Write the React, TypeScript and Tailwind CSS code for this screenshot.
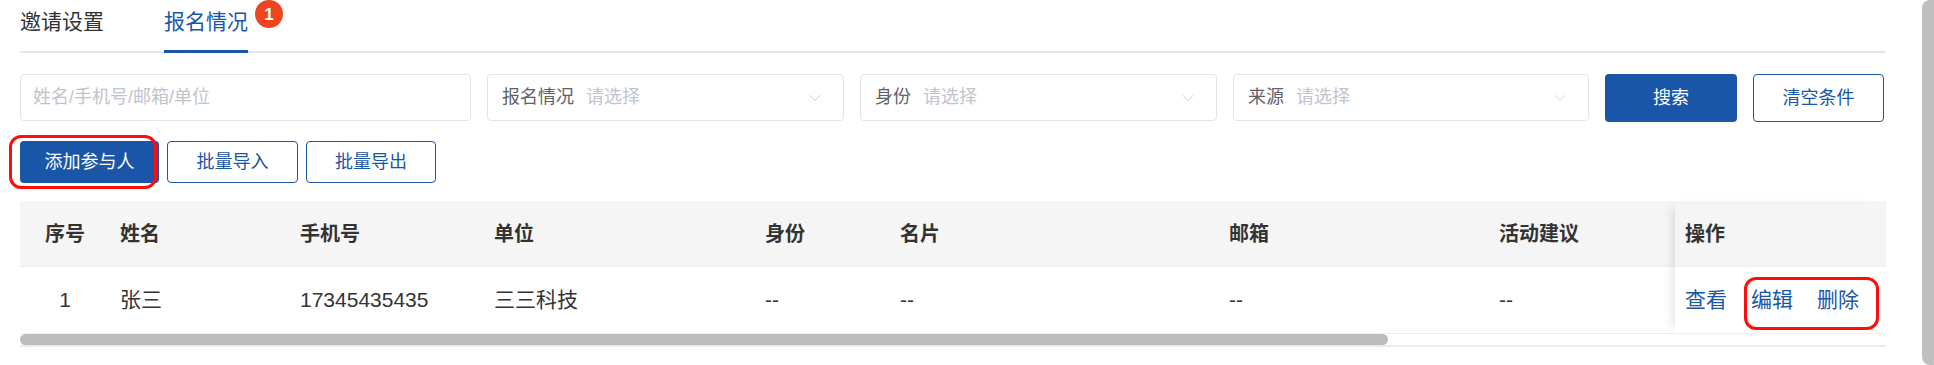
import { ChevronDown } from 'lucide-react'

const font = "font-['Liberation_Sans','Noto_Sans_CJK_SC',sans-serif]"

type Col = { key: string; label: string; width: string; center?: boolean }

const columns: Col[] = [
  { key: 'idx', label: '序号', width: 'w-[90px]', center: true },
  { key: 'name', label: '姓名', width: 'w-[180px]' },
  { key: 'phone', label: '手机号', width: 'w-[194px]' },
  { key: 'company', label: '单位', width: 'w-[271px]' },
  { key: 'role', label: '身份', width: 'w-[135px]' },
  { key: 'card', label: '名片', width: 'w-[329px]' },
  { key: 'email', label: '邮箱', width: 'w-[270px]' },
  { key: 'advice', label: '活动建议', width: 'flex-1' },
]

const rows: Record<string, string>[] = [
  {
    idx: '1',
    name: '张三',
    phone: '17345435435',
    company: '三三科技',
    role: '--',
    card: '--',
    email: '--',
    advice: '--',
  },
]

function Select({ label, width }: { label: string; width: string }) {
  return (
    <div
      className={`${width} flex h-[47px] items-center rounded-[4px] border border-[#e2e4ea] pl-[14px] pr-[18px]`}
    >
      <span className="text-[18px] text-[#606266]">{label}</span>
      <span className="ml-[12px] flex-1 text-[18px] text-[#c0c4cc]">请选择</span>
      <ChevronDown className="h-[20px] w-[20px] text-[#c0c4cc]" strokeWidth={1} />
    </div>
  )
}

export default function App() {
  return (
    <div className={`flex h-[365px] w-full overflow-hidden bg-white ${font}`}>
      <div className="min-w-0 flex-1 pl-[20px] pr-[36px]">
        {/* Tabs */}
        <div className="flex h-[53px] border-b-2 border-[#e4e7ed]">
          <div className="flex h-[51px] items-start pt-[7px] text-[21px] leading-[30px] text-[#333]">
            邀请设置
          </div>
          <div className="relative ml-[60px] -mb-[2px] flex h-[53px] items-start border-b-[3px] border-[#1a56a8] pt-[7px] text-[21px] leading-[30px] text-[#1a56a8]">
            报名情况
            <span className="absolute left-[91px] top-[0px] flex h-[28px] w-[28px] items-center justify-center rounded-full bg-[#ee4520] text-[17px] font-bold leading-none text-white">
              1
            </span>
          </div>
        </div>

        {/* Filters */}
        <div className="mt-[21px] flex gap-[16px]">
          <div className="flex h-[47px] w-[451px] items-center rounded-[4px] border border-[#e2e4ea] px-[12px] text-[18px] text-[#c0c4cc]">
            姓名/手机号/邮箱/单位
          </div>
          <Select label="报名情况" width="w-[357px]" />
          <Select label="身份" width="w-[357px]" />
          <Select label="来源" width="w-[356px]" />
          <button className="h-[48px] w-[132px] rounded-[4px] bg-[#1a56a8] text-[18px] text-white">
            搜索
          </button>
          <button className="h-[48px] w-[131px] rounded-[4px] border border-[#1a56a8] bg-white text-[18px] text-[#1a56a8]">
            清空条件
          </button>
        </div>

        {/* Actions */}
        <div className="mt-[19px] flex gap-[8px]">
          <div className="relative">
            <button className="h-[42px] w-[139px] rounded-[4px] bg-[#1a56a8] text-[18px] text-white">
              添加参与人
            </button>
            <span className="absolute -left-[11px] -top-[6px] h-[54px] w-[148px] rounded-[12px] border-[3px] border-[#ff0d0d]" />
          </div>
          <button className="h-[42px] w-[131px] rounded-[4px] border border-[#1a56a8] bg-white text-[18px] text-[#1a56a8]">
            批量导入
          </button>
          <button className="h-[42px] w-[130px] rounded-[4px] border border-[#1a56a8] bg-white text-[18px] text-[#1a56a8]">
            批量导出
          </button>
        </div>

        {/* Table */}
        <div className="mt-[18px]">
          <div className="flex">
            <div className="min-w-0 flex-1">
              <div className="flex h-[66px] items-center border-b border-[#ebeef5] bg-[#f5f5f5]">
                {columns.map((c) => (
                  <div
                    key={c.key}
                    className={`${c.width} ${c.center ? 'text-center' : 'pl-[10px]'} text-[20px] font-bold text-[#333]`}
                  >
                    {c.label}
                  </div>
                ))}
              </div>
              {rows.map((r) => (
                <div key={r.idx} className="flex h-[67px] items-center border-b border-[#ebeef5] bg-white">
                  {columns.map((c) => (
                    <div
                      key={c.key}
                      className={`${c.width} ${c.center ? 'text-center' : 'pl-[10px]'} text-[21px] text-[#333]`}
                    >
                      {r[c.key]}
                    </div>
                  ))}
                </div>
              ))}
            </div>

            {/* fixed right column */}
            <div className="relative z-10 w-[211px] shadow-[-8px_0_10px_-6px_rgba(0,0,0,0.12)]">
              <div className="flex h-[66px] items-center border-b border-[#ebeef5] bg-[#f5f5f5] pl-[10px] text-[20px] font-bold text-[#333]">
                操作
              </div>
              <div className="relative flex h-[67px] items-center gap-[24px] border-b border-[#ebeef5] bg-white pl-[10px] text-[21px] text-[#1a56a8]">
                <span>查看</span>
                <span>编辑</span>
                <span>删除</span>
                <span className="absolute left-[69px] top-[10px] h-[53px] w-[135px] rounded-[12px] border-[3px] border-[#ff0d0d]" />
              </div>
            </div>
          </div>

          {/* horizontal scrollbar */}
          <div className="flex h-[11px] items-stretch">
            <div className="w-[1368px] rounded-full bg-[#bdbdbd]" />
          </div>
          <div className="h-[2px] bg-[#e8ecf3]" />
        </div>
      </div>

      {/* page scrollbar */}
      <div className="h-[365px] w-[12px] shrink-0 rounded-l-[8px] bg-[#bfbfbf]" />
    </div>
  )
}
